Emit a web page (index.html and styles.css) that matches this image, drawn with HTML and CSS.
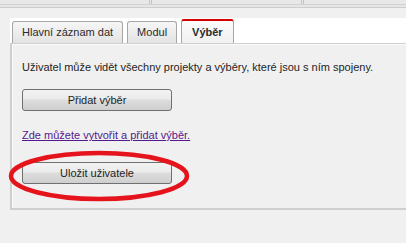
FILE: index.html
```html
<!DOCTYPE html>
<html lang="cs">
<head>
    <meta charset="UTF-8">
    <title>Uživatel - Výběr</title>
    <link rel="stylesheet" href="styles.css">
</head>
<body>
    <div class="grid-head">
        <div class="grid-cell"></div>
        <div class="grid-cell"></div>
        <div class="grid-cell"></div>
    </div>
    <div class="page">
        <div class="tabs">
            <div class="tab">Hlavní záznam dat</div>
            <div class="tab">Modul</div>
            <div class="tab active">Výběr</div>
        </div>
        <div class="panel">
            <p class="info">Uživatel může vidět všechny projekty a výběry, které jsou s ním spojeny.</p>
            <button class="btn">Přidat výběr</button>
            <a class="link" href="#">Zde můžete vytvořit a přidat výběr.</a>
            <div class="save-wrap">
                <button class="btn">Uložit uživatele</button>
                <!-- červené zvýraznění -->
                <svg class="circle" width="190" height="56" viewBox="0 0 190 56">
                    <ellipse cx="95" cy="27" rx="88" ry="23" fill="none" stroke="#e5141c" stroke-width="4.5"/>
                </svg>
            </div>
        </div>
    </div>
</body>
</html>
```

FILE: styles.css
```css
body {
    margin: 0;
    background-color: #f0f0f0;
    font-family: "Liberation Sans", Arial, sans-serif;
    font-size: 11px;
    color: #1e1e1e;
}

.grid-head {
    display: flex;
    height: 4px;
    background-color: #e8e8e8;
    border-bottom: 1px solid #d2d2d2;
    box-shadow: 0 2px 0 #e6e6e6, 0 3px 0 #cdcdcd;
}

.grid-cell {
    width: 149px;
    border-right: 3px double #c4c4c4;
}

.grid-cell:last-child {
    flex: 1;
    border-right: none;
}

.page {
    padding-top: 13px;
}

.tabs {
    display: flex;
    align-items: flex-end;
    gap: 4px;
    margin-left: 10px;
    padding-left: 2px;
    height: 24px;
    background-color: #fff;
    border-top: 1px solid #fff;
}

.tab {
    height: 21px;
    line-height: 21px;
    padding: 0 9px;
    border: 1px solid #a7a7a7;
    border-bottom: none;
    border-radius: 3px 3px 0 0;
    background: linear-gradient(#f6f6f6, #e3e3e3);
    color: #2b2b2b;
}

.tab.active {
    height: 22px;
    line-height: 22px;
    border-top: 2px solid #d40000;
    background: linear-gradient(#fbfbfb, #f0f0f0);
    font-weight: bold;
    padding: 0 10px;
}

.panel {
    margin-left: 10px;
    height: 164px;
    padding: 0 0 0 10px;
    border-left: 2px solid #cfcfcf;
    border-top: 1px solid #cfcfcf;
    border-bottom: 2px solid #cfcfcf;
    box-shadow: inset 1px 1px 0 #fafafa, 0 1px 0 #f8f8f8;
    display: flex;
    flex-direction: column;
    align-items: flex-start;
}

.info {
    margin: 17px 0 0;
}

.btn {
    margin-top: 16px;
    width: 150px;
    height: 22px;
    font-family: inherit;
    font-size: 11px;
    color: #1e1e1e;
    border: 1px solid #707070;
    border-radius: 3px;
    background: linear-gradient(#f2f2f2 0%, #ebebeb 45%, #dddddd 50%, #cfcfcf 100%);
}

.link {
    margin-top: 18px;
    color: #551a8b;
}

.save-wrap {
    position: relative;
    margin-top: 21px;
}

.save-wrap .btn {
    margin-top: 0;
}

.circle {
    position: absolute;
    left: -18px;
    top: -13px;
}
```
